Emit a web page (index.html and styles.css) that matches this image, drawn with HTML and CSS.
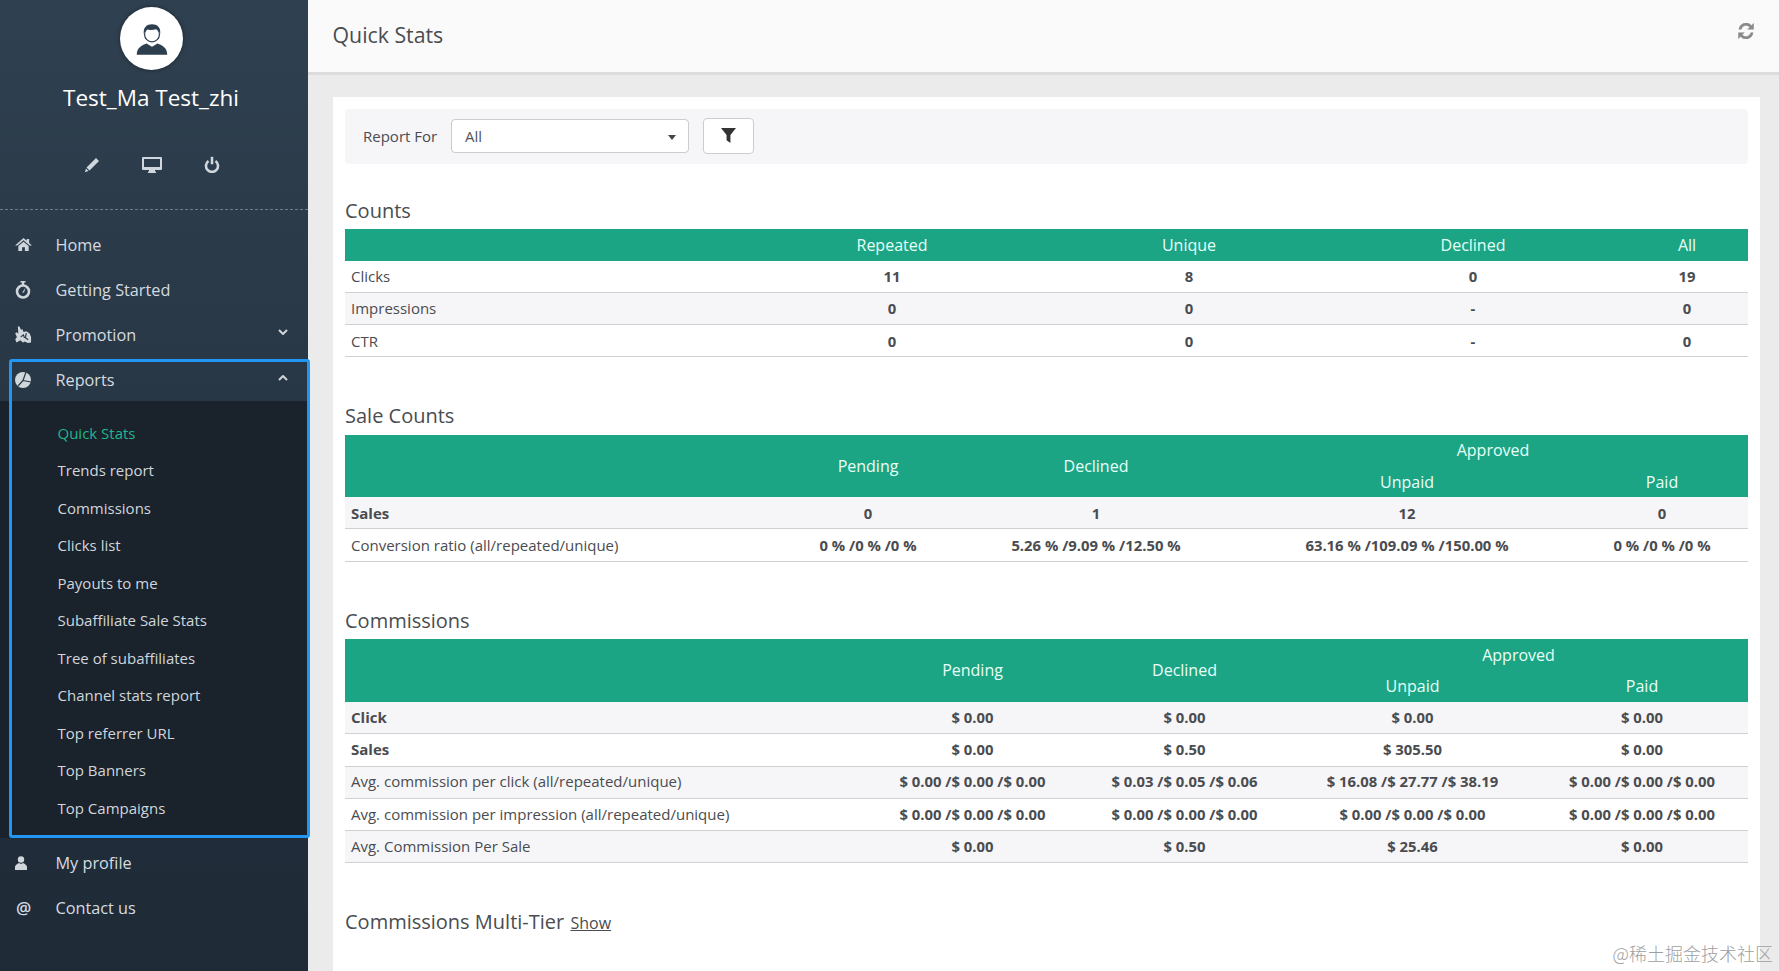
FILE: index.html
```html
<!DOCTYPE html>
<html lang="en">
<head>
<meta charset="utf-8">
<title>Quick Stats</title>
<link rel="stylesheet" href="styles.css">
</head>
<body>
<div class="app">
  <aside class="sidebar">
    <div class="profile">
      <div class="avatar">
        <svg viewBox="0 0 62 62" width="63" height="63">
          <path class="av-dark" d="M16.500 47c0-7 5-9 9.500-11l5.500 3 5.500-3c4.500 2 9.500 4 9.500 11z"/>
          <circle class="av-ring" cx="31.500" cy="27" r="7.300"/>
          <path class="av-dark" d="M23.500 27c-1-7 3-10 8-10s9 3 8 10c-1-3-2-5-4-5-3 1-7 1-9 0-2 1-2 3-3 5z"/>
        </svg>
      </div>
      <div class="name">Test_Ma Test_zhi</div>
      <div class="actions">
        <svg viewBox="0 0 16 16" width="16" height="16"><path class="ic" d="M12 1l3 3-9.500 9.500-3-3zM2 11.500l2.500 2.500L.8 15.200z"/></svg>
        <svg viewBox="0 0 20 16" width="20" height="16"><path class="ic" fill-rule="evenodd" d="M1 0h18a1 1 0 0 1 1 1v11a1 1 0 0 1-1 1h-6v1.500h1V16H6v-1.500h1V13H1a1 1 0 0 1-1-1V1a1 1 0 0 1 1-1zm1 2v8h16V2z"/></svg>
        <svg viewBox="0 0 16 17" width="16" height="17"><path class="ic-bold" d="M4.500 5a6 6 0 1 0 7 0"/><path class="ic-bold" d="M8 .8v7.500"/></svg>
      </div>
    </div>
    <nav class="nav">
      <a class="nav-item">
        <svg class="nav-ic" viewBox="0 0 18 16" width="17" height="15"><path class="ic" d="M9 1l3.500 3V2H15v4.300L18 9h-2.500L9 3.500 2.500 9H0zM3.500 9.500L9 5l5.500 4.500V15h-4v-4h-3v4h-4z"/></svg>
        <span>Home</span>
      </a>
      <a class="nav-item">
        <svg class="nav-ic" viewBox="0 0 16 18" width="16" height="18"><path class="ic" d="M5.500 0h5v1.500H9.200V4H6.800V1.500H5.500z"/><circle class="ic-bold" cx="8" cy="10.500" r="6"/><path class="ic" d="M10.500 6.800l-1.500 4.700H7.200z"/></svg>
        <span>Getting Started</span>
      </a>
      <a class="nav-item">
        <svg class="nav-ic" viewBox="0 0 18 18" width="17" height="18"><path class="ic" d="M3 0l1.800 0 1.500 3.500 1.700-.5 1 2.800 3-.8 3.500 2.500 1.500 3.500v6l-3.500.5-3-1.500-2 1-3-2.500L3.500 16 1.500 17 .3 13.500 2 11 .2 7.500 1.500 6 3.500 7.500z"/><path class="pie-cut" d="M6 11l3-2 1 3M12 7l-1 5 3 2"/></svg>
        <span>Promotion</span>
        <svg class="chev" viewBox="0 0 10 6" width="10" height="6"><path class="ic-line" d="M1 1l4 4 4-4"/></svg>
      </a>
      <a class="nav-item nav-open">
        <svg class="nav-ic" viewBox="0 0 16 16" width="16" height="16"><circle class="ic" cx="8" cy="8" r="8"/><path class="pie-cut" d="M8 8.500L11 0M8 8.500L16 10M8 8.500L3 14"/></svg>
        <span>Reports</span>
        <svg class="chev" viewBox="0 0 10 6" width="10" height="6"><path class="ic-line" d="M1 5l4-4 4 4"/></svg>
      </a>
      <div class="sub">
        <a class="sub-item sub-active">Quick Stats</a>
        <a class="sub-item">Trends report</a>
        <a class="sub-item">Commissions</a>
        <a class="sub-item">Clicks list</a>
        <a class="sub-item">Payouts to me</a>
        <a class="sub-item">Subaffiliate Sale Stats</a>
        <a class="sub-item">Tree of subaffiliates</a>
        <a class="sub-item">Channel stats report</a>
        <a class="sub-item">Top referrer URL</a>
        <a class="sub-item">Top Banners</a>
        <a class="sub-item">Top Campaigns</a>
      </div>
      <a class="nav-item">
        <svg class="nav-ic" viewBox="0 0 12 14" width="12" height="14"><circle class="ic" cx="6" cy="3.500" r="3.200"/><path class="ic" d="M0 14v-3c0-2 2-3 4-4l2 1 2-1c2 1 4 2 4 4v3z"/></svg>
        <span>My profile</span>
      </a>
      <a class="nav-item">
        <span class="nav-at">@</span>
        <span>Contact us</span>
      </a>
    </nav>
  </aside>
  <main class="main">
    <header class="topbar">
      <h1 class="title">Quick Stats</h1>
      <svg class="refresh-ic" viewBox="0 0 16 16" width="16" height="16"><path class="refresh" d="M13.400 2.400L15.500 .5V6.300H9.800l2.100-2.100A5 5 0 0 0 3.200 6.300H.9A7.200 7.200 0 0 1 13.400 2.400zM2.600 13.600L.5 15.500V9.700h5.700l-2.100 2.100a5 5 0 0 0 8.700-2.100h2.300a7.200 7.200 0 0 1-12.500 3.900z"/></svg>
    </header>
    <div class="content">
      <section class="panel">
        <div class="filter">
          <label class="filter-label">Report For</label>
          <div class="select"><span>All</span><i class="caret"></i></div>
          <button class="filter-btn" type="button">
            <svg viewBox="0 0 14 14" width="15" height="15"><path class="funnel" d="M0 0h14L8.800 6.500V14L5.200 11.500V6.500z"/></svg>
          </button>
        </div>

        <h2 class="heading heading-first">Counts</h2>
        <table class="grid grid-counts">
          <colgroup><col class="c1"><col class="c2"><col class="c3"><col class="c4"><col class="c5"></colgroup>
          <thead><tr><th></th><th>Repeated</th><th>Unique</th><th>Declined</th><th>All</th></tr></thead>
          <tbody>
            <tr><td>Clicks</td><td>11</td><td>8</td><td>0</td><td>19</td></tr>
            <tr class="alt"><td>Impressions</td><td>0</td><td>0</td><td>-</td><td>0</td></tr>
            <tr><td>CTR</td><td>0</td><td>0</td><td>-</td><td>0</td></tr>
          </tbody>
        </table>

        <h2 class="heading heading-sale">Sale Counts</h2>
        <table class="grid grid-sales">
          <colgroup><col class="c1"><col class="c2"><col class="c3"><col class="c4"><col class="c5"></colgroup>
          <thead>
            <tr><th rowspan="2"></th><th rowspan="2">Pending</th><th rowspan="2">Declined</th><th colspan="2">Approved</th></tr>
            <tr><th>Unpaid</th><th>Paid</th></tr>
          </thead>
          <tbody>
            <tr class="alt strong"><td>Sales</td><td>0</td><td>1</td><td>12</td><td>0</td></tr>
            <tr><td>Conversion ratio (all/repeated/unique)</td><td>0 % /0 % /0 %</td><td>5.26 % /9.09 % /12.50 %</td><td>63.16 % /109.09 % /150.00 %</td><td>0 % /0 % /0 %</td></tr>
          </tbody>
        </table>

        <h2 class="heading heading-comm">Commissions</h2>
        <table class="grid grid-comm">
          <colgroup><col class="c1"><col class="c2"><col class="c3"><col class="c4"><col class="c5"></colgroup>
          <thead>
            <tr><th rowspan="2"></th><th rowspan="2">Pending</th><th rowspan="2">Declined</th><th colspan="2">Approved</th></tr>
            <tr><th>Unpaid</th><th>Paid</th></tr>
          </thead>
          <tbody>
            <tr class="alt strong"><td>Click</td><td>$ 0.00</td><td>$ 0.00</td><td>$ 0.00</td><td>$ 0.00</td></tr>
            <tr class="strong"><td>Sales</td><td>$ 0.00</td><td>$ 0.50</td><td>$ 305.50</td><td>$ 0.00</td></tr>
            <tr class="alt"><td>Avg. commission per click (all/repeated/unique)</td><td>$ 0.00 /$ 0.00 /$ 0.00</td><td>$ 0.03 /$ 0.05 /$ 0.06</td><td>$ 16.08 /$ 27.77 /$ 38.19</td><td>$ 0.00 /$ 0.00 /$ 0.00</td></tr>
            <tr><td>Avg. commission per impression (all/repeated/unique)</td><td>$ 0.00 /$ 0.00 /$ 0.00</td><td>$ 0.00 /$ 0.00 /$ 0.00</td><td>$ 0.00 /$ 0.00 /$ 0.00</td><td>$ 0.00 /$ 0.00 /$ 0.00</td></tr>
            <tr class="alt"><td>Avg. Commission Per Sale</td><td>$ 0.00</td><td>$ 0.50</td><td>$ 25.46</td><td>$ 0.00</td></tr>
          </tbody>
        </table>

        <h2 class="heading heading-tier">Commissions Multi-Tier <a class="show-link">Show</a></h2>
      </section>
    </div>
  </main>
  <div class="highlight"></div>
  <div class="watermark">@稀土掘金技术社区</div>
</div>
</body>
</html>
```

FILE: styles.css
```css
* { box-sizing: border-box; }
html, body { margin: 0; height: 100%; overflow: hidden; }
body { font-family: "Open Sans", "Noto Sans", sans-serif; font-size: 15px; color: #4a4c50; }
.app { position: relative; display: flex; width: 100%; height: 971px; overflow: hidden; background: #ebebeb; }

/* Sidebar */
.sidebar { flex: 0 0 308px; height: 971px; background: linear-gradient(180deg, #2f4050 0%, #1e2a36 100%); color: #d5dbe0; }
.profile { height: 210px; padding: 7px 6px 0 0; border-bottom: 1px dashed #6d7b88; display: flex; flex-direction: column; align-items: center; }
.avatar { width: 63px; height: 63px; border-radius: 50%; background: #fff; box-shadow: 0 0 4px rgba(0,0,0,.4); flex: none; }
.avatar svg { display: block; }
.av-dark { fill: #2d3e4f; }
.av-ring { fill: #fff; stroke: #2d3e4f; stroke-width: 1.200; }
.name { margin-top: 11px; font-size: 22.500px; line-height: 33px; color: #fff; }
.actions { margin-top: 42px; margin-left: 1px; display: flex; align-items: center; gap: 42px; }
.actions svg { display: block; }
.ic { fill: #cfd6dc; }
.ic-line { fill: none; stroke: #cfd6dc; stroke-width: 2; }
.ic-bold { fill: none; stroke: #cfd6dc; stroke-width: 2.600; }
.pie-cut { fill: none; stroke: #2a3846; stroke-width: 1.200; }

.nav { padding-top: 12px; display: flex; flex-direction: column; }
.nav-item { height: 45px; display: flex; align-items: center; padding-left: 15px; font-size: 16.250px; color: #d5dbe0; position: relative; }
.nav-item > span:not(.nav-at) { position: absolute; left: 55.500px; }
.nav-ic { display: block; }
.nav-at { width: 17px; font-size: 17px; font-weight: 600; text-align: center; }
.nav-open { height: 44px; padding-top: 2px; }
.chev { position: absolute; right: 20px; top: 17px; }
.nav-open .chev { top: 18px; }
.sub { background: #1a222c; padding: 13px 0 11.500px; display: flex; flex-direction: column; margin-bottom: 2px; }
.sub-item { height: 37.500px; display: flex; align-items: center; padding-left: 57.500px; font-size: 15px; color: #d0d6dc; }
.sub-active { color: #22b48f; }

/* Main */
.main { flex: 1; min-width: 0; display: flex; flex-direction: column; }
.topbar { height: 75px; flex: none; padding: 0 25px 3px 24.500px; background: #fafafa; border-bottom: 3px solid #dcdcdc; display: flex; align-items: center; justify-content: space-between; }
.title { margin: 0; font-size: 21.300px; font-weight: 400; line-height: 30px; color: #4a4c50; }
.refresh-ic { margin-bottom: 8px; }
.refresh { fill: #8a8a8a; stroke: #8a8a8a; stroke-width: .5; }
.content { flex: 1; padding: 22px 19px 0 25px; min-height: 0; }
.panel { background: #fff; height: 900px; padding: 12px; }

.filter { height: 55px; padding: 0 0 2px 18px; background: #f6f6f8; border-radius: 4px; display: flex; align-items: center; }
.filter-label { color: #4a4c50; width: 88px; flex: none; }
.select { width: 238px; height: 34px; border: 1px solid #ccc; border-radius: 4px; background: #fff; padding: 0 13px; display: flex; align-items: center; justify-content: space-between; color: #555; }
.caret { display: block; width: 0; height: 0; border: 4px solid transparent; border-top: 5px solid #444; border-bottom: 0; margin: 3px -1px 0 0; }
.filter-btn { width: 51px; height: 36px; margin-left: 14px; padding: 0; background: #fff; border: 1px solid #ccc; border-radius: 4px; display: flex; align-items: center; justify-content: center; }
.funnel { fill: #333; }

.heading { margin: 46px 0 4px; font-size: 20px; font-weight: 400; line-height: 28px; color: #4a4c50; }
.heading-first { margin-top: 33px; }
.heading-sale { margin: 45px 0 5px; }
.heading-comm { margin-top: 45px; }
.heading-tier { margin-top: 45px; }
.show-link { font-size: 16px; text-decoration: underline; color: #4a4c50; margin-left: 1px; }

.grid { width: 100%; table-layout: fixed; border-collapse: separate; border-spacing: 0; }
.grid th { background: #1ba585; color: #e8fff8; font-size: 16px; font-weight: 400; text-align: center; padding: 0; height: 31px; }
.grid-counts th { height: 32px; }
.grid-sales th[colspan] { padding-bottom: 2px; }
.grid-comm tr + tr th { height: 32px; }
.grid-comm th[rowspan] { padding-bottom: 2px; }
.grid td { height: 32px; padding: 0; text-align: center; font-size: 14.850px; font-weight: 700; color: #4a4c50; border-bottom: 1px solid #d0d0d2; }
.grid td:first-child { text-align: left; padding-left: 6px; font-size: 15px; font-weight: 400; }
.grid .strong td:first-child { font-weight: 700; }
.alt td { background: #f6f6f8; }
.grid-counts tbody tr:not(:last-child) td { padding-bottom: 2px; }
.grid-sales tbody tr:last-child td { height: 33px; }
.grid-comm td { height: 32.300px; padding-bottom: 2px; }

.grid-counts .c1 { width: 381px; }
.grid-counts .c2 { width: 332px; }
.grid-counts .c3 { width: 262px; }
.grid-counts .c4 { width: 306px; }
.grid-counts .c5 { width: 122px; }
.grid-sales .c1 { width: 437px; }
.grid-sales .c2 { width: 172px; }
.grid-sales .c3 { width: 284px; }
.grid-sales .c4 { width: 338px; }
.grid-sales .c5 { width: 172px; }
.grid-comm .c1 { width: 520px; }
.grid-comm .c2 { width: 215px; }
.grid-comm .c3 { width: 209px; }
.grid-comm .c4 { width: 247px; }
.grid-comm .c5 { width: 212px; }

/* Overlays */
.highlight { position: absolute; left: 9px; top: 359px; width: 301px; height: 479px; border: 3px solid #2196f3; border-radius: 3px; pointer-events: none; }
.watermark { position: absolute; right: 6px; bottom: 6px; font-family: "Noto Sans CJK SC", sans-serif; font-size: 18px; line-height: 24px; font-weight: 300; color: #a0a0a0; }
```
